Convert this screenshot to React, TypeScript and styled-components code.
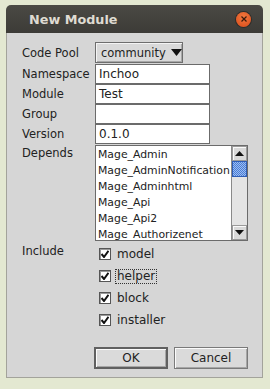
import React from "react";
import styled, {createGlobalStyle} from "styled-components";

const Global = createGlobalStyle`
    html, body {
        margin: 0;
        padding: 0;
        background: #e3e8d1;
    }
    body {
        font-family: "DejaVu Sans", "Liberation Sans", sans-serif;
    }
`;

const Page = styled.div`
    width: 270px;
    height: 389px;
    padding: 5px 0 0 6px;
    box-sizing: border-box;
`;

const Window = styled.div`
    width: 257px;
    height: 373px;
    display: flex;
    flex-direction: column;
`;

const TitleBar = styled.div`
    height: 28px;
    flex: none;
    border-radius: 5px 5px 0 0;
    background: linear-gradient(#4a4944, #3c3b37);
    display: flex;
    align-items: center;
    justify-content: space-between;
    padding: 0 12px 0 23px;
`;

const Title = styled.span`
    color: #dfdbd2;
    font-weight: bold;
    font-size: 12.8px;
`;

const CloseButton = styled.div`
    width: 15px;
    height: 15px;
    border-radius: 50%;
    background: radial-gradient(circle at 50% 35%, #f2793f, #d84a18);
    box-shadow: 0 0 0 1px #2e2d2a;
    display: flex;
    align-items: center;
    justify-content: center;
`;

const Body = styled.div`
    flex: 1;
    background: #d6d6d6;
    border: 1px solid #a3a39b;
    border-top: none;
    padding: 9px 14px 0 15px;
    display: flex;
    flex-direction: column;
    font-size: 11.5px;
    color: #222;
`;

const Form = styled.div`
    display: grid;
    grid-template-columns: 73px 1fr;
    align-items: center;
`;

const Label = styled.div<{ $top?: number }>`
    align-self: ${p => (p.$top !== undefined ? "start" : "center")};
    padding-top: ${p => p.$top || 0}px;
`;

const Combo = styled.div`
    width: 88px;
    height: 21px;
    box-sizing: border-box;
    border: 1px solid #6e6e6e;
    box-shadow: inset 1px 1px 0 #f4f4f4, inset -1px -1px 0 #a8a8a8;
    background: #d9d9d9;
    display: flex;
    align-items: center;
    padding: 0 6px 0 5px;
    gap: 5px;
    margin-bottom: 1px;
    font-size: 11.5px;
    svg {
        flex: none;
    }
`;

const Field = styled.div`
    width: 115px;
    height: 20px;
    box-sizing: border-box;
    background: #fff;
    border: 1px solid #6b6b6b;
    display: flex;
    align-items: center;
    padding-left: 3px;
    font-size: 12px;
`;

const ListBox = styled.div`
    width: 153px;
    height: 96px;
    box-sizing: border-box;
    border: 1px solid #6b6b6b;
    background: #fff;
    display: flex;
    margin-top: 1px;
`;

const Items = styled.div`
    flex: 1;
    min-width: 0;
    display: flex;
    flex-direction: column;
    padding: 1px 0 0 2px;
    overflow: hidden;
`;

const Item = styled.div`
    height: 16px;
    line-height: 16px;
    font-size: 10.85px;
    white-space: nowrap;
`;

const Scrollbar = styled.div`
    width: 15px;
    flex: none;
    border-left: 1px solid #8a8a8a;
    background: #e4e4e4;
    display: flex;
    flex-direction: column;
`;

const ScrollButton = styled.div`
    height: 15px;
    box-sizing: border-box;
    background: #d9d9d9;
    border: 1px solid #9a9a9a;
    box-shadow: inset 1px 1px 0 #fafafa;
    display: flex;
    align-items: center;
    justify-content: center;
`;

const Thumb = styled.div`
    height: 16px;
    box-sizing: border-box;
    border: 1px solid #2f5db5;
    background: repeating-conic-gradient(#4a7ed6 0 25%, #9dbcf0 0 50%) 0 0 / 2px 2px;
`;

const Track = styled.div`
    flex: 1;
`;

const Checks = styled.div`
    display: flex;
    flex-direction: column;
    gap: 8px;
    padding: 6px 0 0 4px;
`;

const CheckRow = styled.div`
    display: flex;
    align-items: center;
    gap: 5px;
    height: 14px;
    font-size: 12px;
`;

const Box = styled.div`
    width: 12px;
    height: 12px;
    box-sizing: border-box;
    border: 1px solid #555;
    background: #fff;
    box-shadow: inset 1px 1px 0 #999;
    display: flex;
    align-items: center;
    justify-content: center;
`;

const CheckText = styled.span<{ $focus?: boolean }>`
    outline: ${p => (p.$focus ? "1px dotted #333" : "none")};
    padding: 0 1px;
    line-height: 13px;
`;

const Buttons = styled.div`
    display: flex;
    gap: 6px;
    margin: 20px 0 0 72px;
`;

const Button = styled.div<{ $default?: boolean }>`
    width: 75px;
    height: 22px;
    box-sizing: border-box;
    border: ${p => (p.$default ? "2px solid #606060" : "1px solid #7a7a7a")};
    box-shadow: inset 1px 1px 0 #fbfbfb, inset -1px -1px 0 #a6a6a6;
    background: #dadada;
    display: flex;
    align-items: center;
    justify-content: center;
    font-size: 12px;
`;

const Arrow = ({up}: { up?: boolean }) => (
    <svg width="9" height="5" viewBox="0 0 9 5">
        <path d={up ? "M0 5 L4.5 0 L9 5 Z" : "M0 0 L9 0 L4.5 5 Z"} fill="#111"/>
    </svg>
);

const Tick = () => (
    <svg width="8" height="8" viewBox="0 0 8 8">
        <path d="M0.5 4 L3 7 L7.5 0.8" stroke="#111" strokeWidth="2" fill="none"/>
    </svg>
);

const modules = [
    "Mage_Admin",
    "Mage_AdminNotification",
    "Mage_Adminhtml",
    "Mage_Api",
    "Mage_Api2",
    "Mage_Authorizenet",
];

const includes = ["model", "helper", "block", "installer"];

const App = () => {
    return (
        <>
            <Global/>
            <Page>
                <Window>
                    <TitleBar>
                        <Title>New Module</Title>
                        <CloseButton>
                            <svg width="6" height="6" viewBox="0 0 6 6">
                                <path d="M0.5 0.5 L5.5 5.5 M5.5 0.5 L0.5 5.5" stroke="#3a1a0c" strokeWidth="1.2"/>
                            </svg>
                        </CloseButton>
                    </TitleBar>
                    <Body>
                        <Form>
                            <Label>Code Pool</Label>
                            <Combo>
                                <span>community</span>
                                <svg width="11" height="7" viewBox="0 0 11 7">
                                    <path d="M0 0 L11 0 L5.5 7 Z" fill="#111"/>
                                </svg>
                            </Combo>
                            <Label>Namespace</Label>
                            <Field>Inchoo</Field>
                            <Label>Module</Label>
                            <Field>Test</Field>
                            <Label>Group</Label>
                            <Field/>
                            <Label>Version</Label>
                            <Field>0.1.0</Field>
                            <Label $top={2}>Depends</Label>
                            <ListBox>
                                <Items>
                                    {modules.map(m => <Item key={m}>{m}</Item>)}
                                </Items>
                                <Scrollbar>
                                    <ScrollButton><Arrow up/></ScrollButton>
                                    <Thumb/>
                                    <Track/>
                                    <ScrollButton><Arrow/></ScrollButton>
                                </Scrollbar>
                            </ListBox>
                            <Label $top={3}>Include</Label>
                            <Checks>
                                {includes.map(name => (
                                    <CheckRow key={name}>
                                        <Box><Tick/></Box>
                                        <CheckText $focus={name === "helper"}>{name}</CheckText>
                                    </CheckRow>
                                ))}
                            </Checks>
                        </Form>
                        <Buttons>
                            <Button $default>OK</Button>
                            <Button>Cancel</Button>
                        </Buttons>
                    </Body>
                </Window>
            </Page>
        </>
    );
};

export default App;
